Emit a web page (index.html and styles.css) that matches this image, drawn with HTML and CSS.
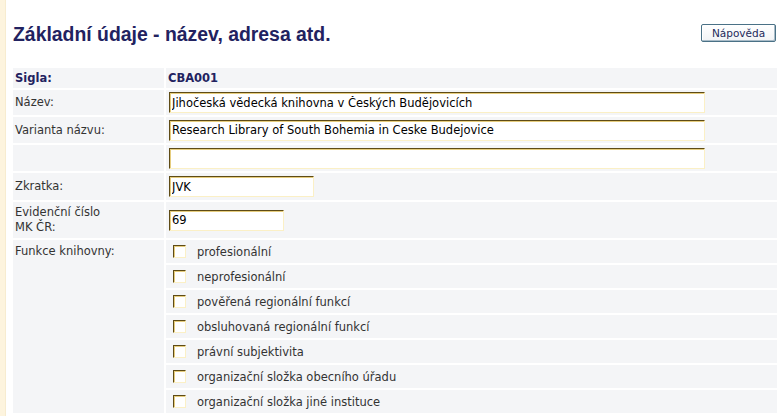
FILE: index.html
```html
<!DOCTYPE html>
<html lang="cs">
<head>
<meta charset="utf-8">
<title>Základní údaje</title>
<link rel="stylesheet" href="styles.css">
</head>
<body>
<div class="page">
  <div class="strip"></div>
  <div class="main">
    <div class="header">
      <h1 class="title">Základní údaje - název, adresa atd.</h1>
      <button class="help" type="button">Nápověda</button>
    </div>
    <div class="form">
      <div class="lbl strong r-sigla">Sigla:</div>
      <div class="val strong r-sigla">CBA001</div>

      <div class="lbl r-nazev">Název:</div>
      <div class="val r-nazev"><input class="inp wide" type="text" value="Jihočeská vědecká knihovna v Českých Budějovicích"></div>

      <div class="lbl r-var">Varianta názvu:</div>
      <div class="val r-var"><input class="inp wide" type="text" value="Research Library of South Bohemia in Ceske Budejovice"></div>

      <div class="lbl r-empty"></div>
      <div class="val r-empty"><input class="inp wide" type="text" value=""></div>

      <div class="lbl r-zkr">Zkratka:</div>
      <div class="val r-zkr"><input class="inp short" type="text" value="JVK"></div>

      <div class="lbl r-evid">Evidenční číslo<br>MK ČR:</div>
      <div class="val r-evid"><input class="inp tiny" type="text" value="69"></div>

      <div class="lbl funkce">Funkce knihovny:</div>
      <label class="val chk"><input class="cb" type="checkbox"><span>profesionální</span></label>
      <label class="val chk"><input class="cb" type="checkbox"><span>neprofesionální</span></label>
      <label class="val chk"><input class="cb" type="checkbox"><span>pověřená regionální funkcí</span></label>
      <label class="val chk"><input class="cb" type="checkbox"><span>obsluhovaná regionální funkcí</span></label>
      <label class="val chk"><input class="cb" type="checkbox"><span>právní subjektivita</span></label>
      <label class="val chk"><input class="cb" type="checkbox"><span>organizační složka obecního úřadu</span></label>
      <label class="val chk"><input class="cb" type="checkbox"><span>organizační složka jiné instituce</span></label>
    </div>
  </div>
</div>
</body>
</html>
```
FILE: styles.css
```css
html, body {
  margin: 0;
  padding: 0;
  background: #ffffff;
}

body {
  font-family: "DejaVu Sans", Verdana, sans-serif;
  font-size: 11.5px;
  color: #333333;
}

.page {
  display: flex;
  min-height: 416px;
}

.strip {
  width: 5px;
  flex: none;
  background: #fdf4de;
  border-right: 1px solid #f7ecd0;
}

.main {
  flex: 1;
  padding: 0 7px;
}

.header {
  height: 68px;
  display: flex;
  justify-content: space-between;
  align-items: flex-start;
  box-sizing: border-box;
  padding-top: 23px;
}

.title {
  margin: 0;
  font-family: "Liberation Sans", Arial, sans-serif;
  font-size: 19.4px;
  line-height: 22px;
  font-weight: bold;
  color: #222260;
}

.help {
  margin: 1px 1px 0 0;
  width: 75px;
  height: 18px;
  padding: 0;
  background: linear-gradient(#ffffff, #f1f3f5);
  border: 1px solid #4a7186;
  border-radius: 2px;
  box-shadow: inset -1px -1px 0 #a9bcc8, inset 1px 1px 0 #ffffff;
  font-family: "DejaVu Sans", Verdana, sans-serif;
  font-size: 10.5px;
  color: #1e2a5a;
  line-height: 16px;
}

.form {
  display: grid;
  grid-template-columns: 151px 1fr;
  grid-template-rows: 20px 25px 26px 26px 27px 36px repeat(7, 23px);
  gap: 2px;
}

.lbl, .val {
  background: #f4f5f7;
  display: flex;
  align-items: center;
}

.lbl {
  padding-left: 2px;
  line-height: 15px;
}

.val {
  padding-left: 3px;
}

.strong {
  font-weight: bold;
  color: #222260;
}

.val.strong {
  padding-left: 2px;
}

.funkce {
  grid-row: span 7;
  align-items: flex-start;
  padding-top: 4px;
}

.inp {
  box-sizing: border-box;
  height: 21px;
  margin: 0;
  padding: 0 2px;
  border: 1px solid;
  border-color: #5e4b16 #fbf0c6 #fbf0c6 #5e4b16;
  box-shadow: inset 1px 1px 0 #e6cd7e;
  background: #ffffff;
  font-family: "DejaVu Sans", Verdana, sans-serif;
  font-size: 11.5px;
  color: #000000;
  outline: none;
}

.wide { width: 536px; }
.short { width: 145px; }
.tiny { width: 115px; }

.chk {
  padding-left: 7px;
  cursor: default;
}

.cb {
  appearance: none;
  -webkit-appearance: none;
  box-sizing: border-box;
  width: 13px;
  height: 13px;
  margin: 0 11px 0 0;
  border: 1px solid;
  border-color: #5e4b16 #fbf0c6 #fbf0c6 #5e4b16;
  box-shadow: inset 1px 1px 0 #e6cd7e;
  background: #ffffff;
  flex: none;
}
```
